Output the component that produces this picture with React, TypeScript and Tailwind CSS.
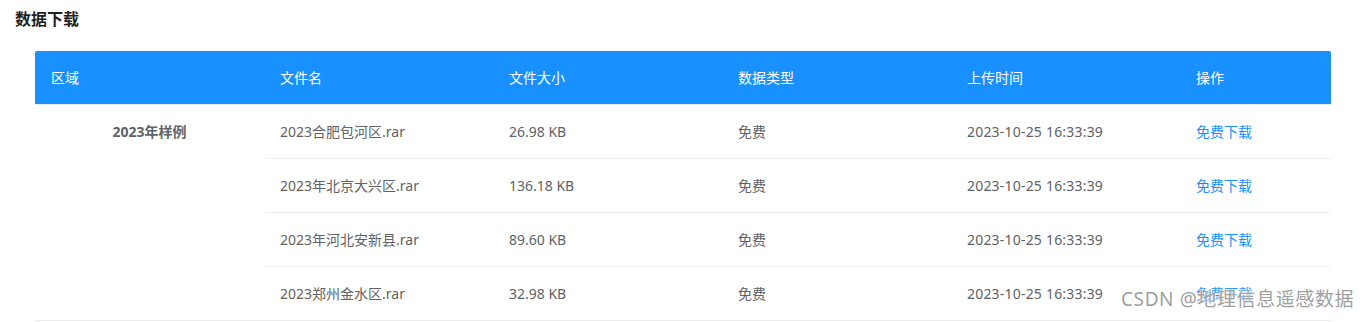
const columns = ['区域', '文件名', '文件大小', '数据类型', '上传时间', '操作'];

const files = [
  { name: '2023合肥包河区.rar', size: '26.98 KB' },
  { name: '2023年北京大兴区.rar', size: '136.18 KB' },
  { name: '2023年河北安新县.rar', size: '89.60 KB' },
  { name: '2023郑州金水区.rar', size: '32.98 KB' },
];

const font = { fontFamily: '"Noto Sans", "Noto Sans CJK SC", sans-serif' };

const App = () => {
  return (
    <div className="relative w-[1368px] h-[322px] bg-white overflow-hidden" style={font}>
      <div className="h-[38px] px-[15px] flex items-center text-[16px] font-bold text-[#1f1f1f]">数据下载</div>
      <table className="ml-[35px] mt-[13px] w-[1296px] table-fixed border-collapse text-[14px] text-[#606266]">
        <colgroup>
          <col className="w-[229px]" />
          <col className="w-[229px]" />
          <col className="w-[229px]" />
          <col className="w-[229px]" />
          <col className="w-[229px]" />
          <col className="w-[151px]" />
        </colgroup>
        <thead>
          <tr className="h-[53px] bg-[#1890ff] border-b border-[#ebeef5]">
            {columns.map((c) => (
              <th key={c} className="px-4 text-left font-normal text-white first:rounded-tl-[2px] last:rounded-tr-[2px]">
                {c}
              </th>
            ))}
          </tr>
        </thead>
        <tbody>
          {files.map((f, i) => (
            <tr key={f.name} className="h-[54px] border-b border-[#ebeef5]">
              {i === 0 && (
                <td rowSpan={4} className="align-top text-center font-bold pt-[16px] leading-[21px]">
                  2023年样例
                </td>
              )}
              <td className="px-4">{f.name}</td>
              <td className="px-4">{f.size}</td>
              <td className="px-4">免费</td>
              <td className="px-4 tracking-[0.2px]">2023-10-25 16:33:39</td>
              <td className="px-4 text-[#1890ff]">免费下载</td>
            </tr>
          ))}
        </tbody>
      </table>
      {/* watermark over the last row */}
      <div
        className="absolute left-[1121px] top-[286px] text-[19px] tracking-[0.6px] text-[#a0a0a0] leading-[26px] whitespace-nowrap"
        style={{ textShadow: '0 0 2px #fff, 0 0 2px #fff' }}
      >
        CSDN @地理信息遥感数据
      </div>
    </div>
  );
};

export default App;
